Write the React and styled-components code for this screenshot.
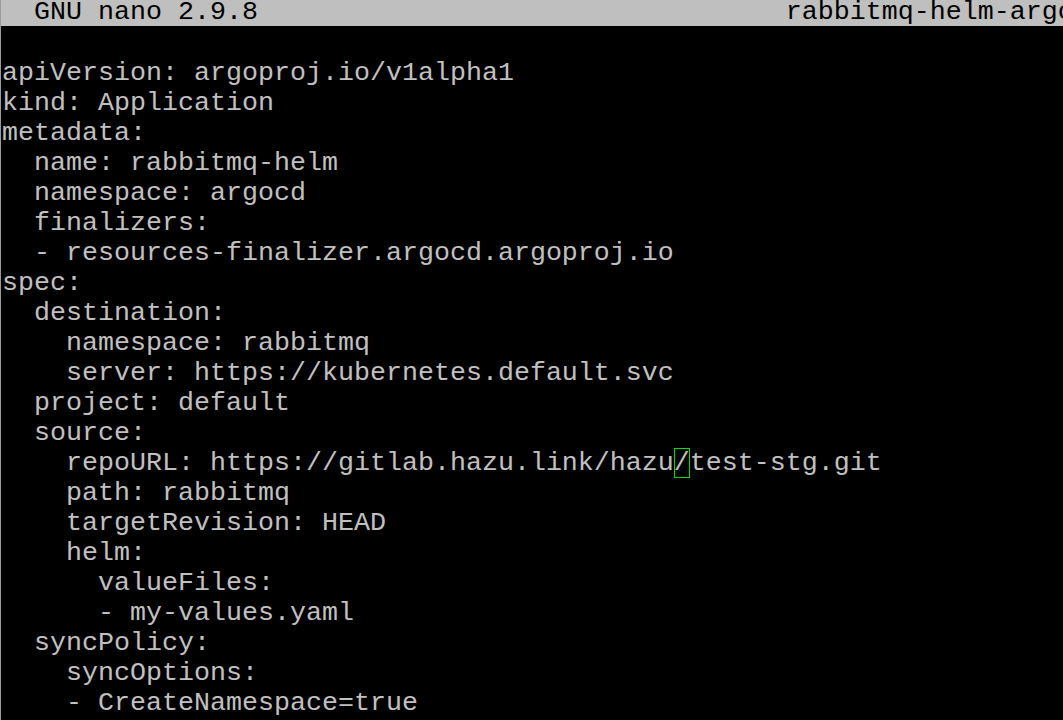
import React from "react";
import styled, { createGlobalStyle } from "styled-components";

const Global = createGlobalStyle`
  html, body { margin: 0; padding: 0; background: #000; }
  body { width: 1063px; height: 720px; overflow: hidden; }
`;

const Terminal = styled.div`
  width: 1063px;
  height: 720px;
  box-sizing: border-box;
  background: #000;
  border-left: 1px solid #9a9a9a;
  padding-left: 1px;
  overflow: hidden;
  font-family: "Liberation Mono", "Courier New", monospace;
  font-size: 26.67px;
  display: flex;
  flex-direction: column;
`;

const TitleBar = styled.div`
  height: 26px;
  line-height: 24px;
  margin-left: -2px;
  padding-left: 2px;
  background: #bfbfbf;
  color: #000;
  white-space: pre;
  overflow: hidden;
  flex: none;
`;

const Body = styled.div`
  display: flex;
  flex-direction: column;
  padding-top: 32px;
  color: #c0c0c0;
`;

const Line = styled.div`
  height: 30px;
  line-height: 30px;
  white-space: pre;
`;

const Cursor = styled.span`
  outline: 1px solid #00e000;
  outline-offset: -1px;
`;

const lines = [
  "apiVersion: argoproj.io/v1alpha1",
  "kind: Application",
  "metadata:",
  "  name: rabbitmq-helm",
  "  namespace: argocd",
  "  finalizers:",
  "  - resources-finalizer.argocd.argoproj.io",
  "spec:",
  "  destination:",
  "    namespace: rabbitmq",
  "    server: https://kubernetes.default.svc",
  "  project: default",
  "  source:",
  "CURSOR",
  "    path: rabbitmq",
  "    targetRevision: HEAD",
  "    helm:",
  "      valueFiles:",
  "      - my-values.yaml",
  "  syncPolicy:",
  "    syncOptions:",
  "    - CreateNamespace=true",
];

export default function App() {
  return (
    <>
      <Global />
      <Terminal>
        <TitleBar>
          {"  GNU nano 2.9.8" + " ".repeat(33) + "rabbitmq-helm-argocd.yaml"}
        </TitleBar>
        <Body>
          {lines.map((l, i) =>
            l === "CURSOR" ? (
              <Line key={i}>
                {"    repoURL: https://gitlab.hazu.link/hazu"}
                <Cursor>/</Cursor>
                {"test-stg.git"}
              </Line>
            ) : (
              <Line key={i}>{l}</Line>
            )
          )}
        </Body>
      </Terminal>
    </>
  );
}
